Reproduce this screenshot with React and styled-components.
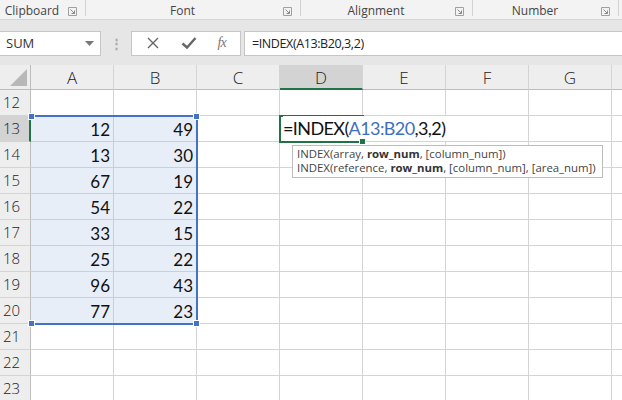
import React from 'react';
import styled, { createGlobalStyle } from 'styled-components';

const GRID = '#d4d4d4';
const GREEN = '#217346';
const BLUE = '#4472c4';

const cols = ['A', 'B', 'C', 'D', 'E', 'F', 'G', 'H'];
const rows = [12, 13, 14, 15, 16, 17, 18, 19, 20, 21, 22, 23];
const data = {
  13: [12, 49], 14: [13, 30], 15: [67, 19], 16: [54, 22],
  17: [33, 15], 18: [25, 22], 19: [96, 43], 20: [77, 23],
};
const groups = [
  { name: 'Clipboard', width: 86 },
  { name: 'Font', width: 215 },
  { name: 'Alignment', width: 172 },
  { name: 'Number', width: 146 },
];

const GlobalStyle = createGlobalStyle`
  html, body { margin: 0; padding: 0; background: #fff; overflow: hidden; }
  body { font-family: "Open Sans", "Noto Sans", sans-serif; }
`;

const Page = styled.div`
  width: 622px;
  height: 400px;
  overflow: hidden;
  background: #e6e6e6;
`;

const Ribbon = styled.div`
  display: flex;
  height: 19px;
  background: #f3f3f3;
  border-bottom: 1px solid #d5d5d5;
`;

const Group = styled.div`
  display: flex;
  align-items: flex-start;
  flex: 0 0 ${(p) => p.$w}px;
  box-sizing: border-box;
  border-right: 1px solid #d2d2d2;
  height: 16px;
`;

const GroupLabel = styled.span`
  flex: 1;
  text-align: center;
  font-size: 12px;
  color: #444;
  line-height: 16px;
  padding: 3px 4px 0 0;
`;

const Launcher = styled.svg`
  width: 9px;
  height: 9px;
  margin: 7px 8px 0 0;
`;

const FormulaBar = styled.div`
  display: flex;
  align-items: center;
  height: 45px;
  padding: 10px 0 9px;
  box-sizing: border-box;
`;

const NameBox = styled.div`
  display: flex;
  align-items: center;
  justify-content: space-between;
  width: 101px;
  height: 25px;
  box-sizing: border-box;
  background: #fff;
  border: 1px solid #c6c6c6;
  border-left: none;
  padding: 0 6px 0 6px;
  font-size: 13px;
  color: #333;
`;

const Dots = styled.div`
  width: 30px;
  text-align: center;
  color: #a8a8a8;
  font-size: 13px;
  font-weight: 700;
  line-height: 1;
`;

const FxBox = styled.div`
  display: flex;
  align-items: center;
  justify-content: space-around;
  width: 110px;
  height: 25px;
  box-sizing: border-box;
  background: #fff;
  border: 1px solid #c6c6c6;
  padding: 0 4px;
`;

const Fx = styled.span`
  font-family: "Liberation Serif", "DejaVu Serif", serif;
  font-style: italic;
  font-size: 14px;
  color: #777;
  letter-spacing: -1px;
`;

const Input = styled.div`
  flex: 1;
  height: 25px;
  margin-left: 3px;
  box-sizing: border-box;
  background: #fff;
  border: 1px solid #c6c6c6;
  border-right: none;
  padding-left: 7px;
  font-size: 12.5px;
  letter-spacing: -0.4px;
  line-height: 23px;
  color: #222;
`;

const Sheet = styled.div`
  position: relative;
  display: grid;
  grid-template-columns: 31px repeat(8, 83px);
  grid-template-rows: 25px repeat(12, 26px);
  background: #fff;
`;

const Corner = styled.div`
  background: #eeeeee;
  box-sizing: border-box;
  border-right: 1px solid #bdbdbd;
  border-bottom: 1px solid #bdbdbd;
  display: flex;
  align-items: flex-end;
  justify-content: flex-end;
  padding: 0 3px 3px 0;
`;

const ColHead = styled.div`
  box-sizing: border-box;
  background: ${(p) => (p.$active ? '#d3d3d3' : '#eeeeee')};
  border-right: 1px solid ${GRID};
  border-bottom: ${(p) => (p.$active ? `2px solid ${GREEN}` : '1px solid #bdbdbd')};
  text-align: center;
  font-size: 17px;
  font-weight: 300;
  line-height: 25px;
  color: #222;
`;

const RowHead = styled.div`
  box-sizing: border-box;
  background: ${(p) => (p.$active ? '#d3d3d3' : '#eeeeee')};
  border-right: ${(p) => (p.$active ? `2px solid ${GREEN}` : '1px solid #bdbdbd')};
  border-bottom: 1px solid ${GRID};
  padding-left: 3px;
  font-size: 15px;
  font-weight: 300;
  line-height: 25px;
  color: #222;
`;

const Cell = styled.div`
  box-sizing: border-box;
  background: ${(p) => (p.$sel ? '#e8eef8' : '#fff')};
  border-right: 1px solid ${(p) => (p.$sel ? '#c9ced8' : GRID)};
  border-bottom: 1px solid ${(p) => (p.$sel ? '#c9ced8' : GRID)};
  text-align: right;
  padding-right: 3px;
  font-family: Lato, "Open Sans", sans-serif;
  font-size: 17px;
  line-height: 27px;
  color: #111;
`;

const Selection = styled.div`
  position: absolute;
  left: 31px;
  top: 50px;
  width: 167px;
  height: 210px;
  box-sizing: border-box;
  border: 2px solid ${BLUE};
  border-left: none;
  pointer-events: none;
`;

const Handle = styled.div`
  position: absolute;
  width: 5px;
  height: 5px;
  background: ${(p) => p.$c || BLUE};
  border: 1px solid #fff;
  ${(p) => (p.$top ? 'top: -4px;' : 'bottom: -4px;')}
  ${(p) => (p.$left ? 'left: -3px;' : 'right: -4px;')}
`;

const Editor = styled.div`
  position: absolute;
  left: 279px;
  top: 50px;
  width: 85px;
  height: 28px;
  box-sizing: border-box;
  border: 2px solid ${GREEN};
`;

const EditText = styled.div`
  position: absolute;
  left: 2px;
  top: -1px;
  width: 166px;
  background: #fff;
  white-space: nowrap;
  font-family: Lato, "Open Sans", sans-serif;
  font-size: 18px;
  letter-spacing: -0.6px;
  line-height: 25px;
  color: #111;
`;

const Ref = styled.span`
  color: #3f6fba;
`;

const Tip = styled.div`
  position: absolute;
  left: 292px;
  top: 80px;
  width: 311px;
  height: 33px;
  box-sizing: border-box;
  background: #fff;
  border: 1px solid #bcbcbc;
  padding: 1px 0 0 4px;
  font-size: 11.4px;
  line-height: 14px;
  color: #444;
  white-space: nowrap;
  b { color: #333; }
`;

const LauncherIcon = () => (
  <Launcher viewBox="0 0 9 9">
    <path d="M0.5 0.5h8v8h-8z" fill="none" stroke="#a0a0a0" />
    <path d="M2.5 2.5l4 4M6.5 3.5v3h-3" fill="none" stroke="#8a8a8a" />
  </Launcher>
);

export default function App() {
  return (
    <Page>
      <GlobalStyle />
      <Ribbon>
        {groups.map((g) => (
          <Group key={g.name} $w={g.width}>
            <GroupLabel>{g.name}</GroupLabel>
            <LauncherIcon />
          </Group>
        ))}
      </Ribbon>
      <FormulaBar>
        <NameBox>
          <span>SUM</span>
          <svg width="9" height="5" viewBox="0 0 9 5">
            <path d="M0 0h9L4.5 5z" fill="#777" />
          </svg>
        </NameBox>
        <Dots>⋮</Dots>
        <FxBox>
          <svg width="14" height="14" viewBox="0 0 14 14">
            <path d="M2 2l10 10M12 2L2 12" stroke="#666" strokeWidth="1.4" />
          </svg>
          <svg width="16" height="14" viewBox="0 0 16 14">
            <path d="M1.5 7.5l4.5 4L14.5 2" stroke="#666" strokeWidth="2.4" fill="none" />
          </svg>
          <Fx>fx</Fx>
        </FxBox>
        <Input>=INDEX(A13:B20,3,2)</Input>
      </FormulaBar>
      <Sheet>
        <Corner>
          <svg width="17" height="17" viewBox="0 0 17 17">
            <path d="M17 0V17H0z" fill="#b8b8b8" />
          </svg>
        </Corner>
        {cols.map((c) => (
          <ColHead key={c} $active={c === 'D'}>{c === 'H' ? '' : c}</ColHead>
        ))}
        {rows.map((r) => (
          <React.Fragment key={r}>
            <RowHead $active={r === 13}>{r}</RowHead>
            {cols.map((c, i) => {
              const sel = data[r] && i < 2;
              return (
                <Cell key={c} $sel={sel}>
                  {sel ? data[r][i] : ''}
                </Cell>
              );
            })}
          </React.Fragment>
        ))}
        <Selection>
          <Handle $top $left />
          <Handle $top />
          <Handle $left />
          <Handle />
        </Selection>
        <Editor>
          <EditText>
            =INDEX(<Ref>A13:B20</Ref>,3,2)
          </EditText>
          <Handle $c={GREEN} />
        </Editor>
        <Tip>
          INDEX(array, <b>row_num</b>, [column_num])
          <br />
          INDEX(reference, <b>row_num</b>, [column_num], [area_num])
        </Tip>
      </Sheet>
    </Page>
  );
}
